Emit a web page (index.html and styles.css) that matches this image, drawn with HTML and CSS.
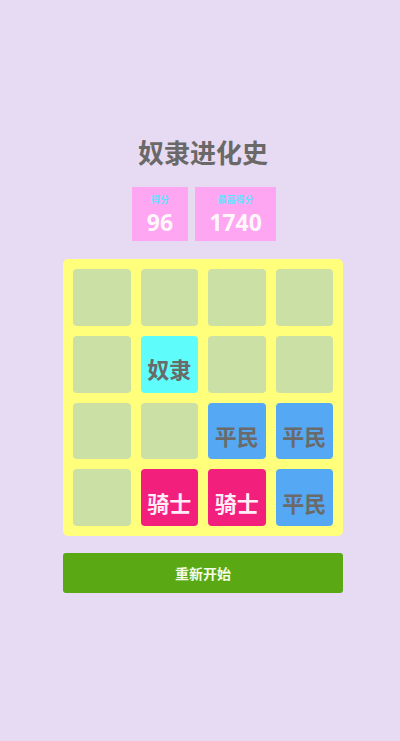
FILE: index.html
```html
<!DOCTYPE html>
<html lang="zh">
<head>
<meta charset="utf-8">
<link rel="stylesheet" href="styles.css">
</head>
<body>
<div class="app">
  <h1 class="title">奴隶进化史</h1>
  <div class="scores">
    <div class="score s1"><div class="label">得分</div><div class="num">96</div></div>
    <div class="score s2"><div class="label">最高得分</div><div class="num">1740</div></div>
  </div>
  <div class="board">
    <div class="cell"></div><div class="cell"></div><div class="cell"></div><div class="cell"></div>
    <div class="cell"></div><div class="cell slave">奴隶</div><div class="cell"></div><div class="cell"></div>
    <div class="cell"></div><div class="cell"></div><div class="cell civ">平民</div><div class="cell civ">平民</div>
    <div class="cell"></div><div class="cell knight">骑士</div><div class="cell knight">骑士</div><div class="cell civ">平民</div>
  </div>
  <button class="restart">重新开始</button>
</div>
</body>
</html>
```
FILE: styles.css
```css
html, body {
  margin: 0;
  padding: 0;
  background: #e7dbf3;
  height: 100%;
}
body {
  font-family: "Noto Sans CJK SC", "Noto Sans", sans-serif;
}
.app {
  width: 280px;
  margin-left: 63px;
  padding-top: 133px;
  display: flex;
  flex-direction: column;
  align-items: center;
}
.title {
  margin: 0;
  font-size: 26px;
  line-height: 38px;
  font-weight: 700;
  color: #6b6868;
}
.scores {
  margin-top: 16px;
  display: flex;
  gap: 7px;
  padding-left: 2px;
}
.score {
  height: 54px;
  background: #fea6f2;
  display: flex;
  flex-direction: column;
  align-items: center;
  box-sizing: border-box;
  padding-top: 8px;
}
.s1 { width: 56px; }
.s2 { width: 81px; }
.label {
  font-size: 9px;
  line-height: 10px;
  color: #5fe4ff;
  font-weight: 700;
}
.num {
  margin-top: 4px;
  font-family: "Open Sans", "Noto Sans", sans-serif;
  font-size: 23px;
  line-height: 26px;
  font-weight: 700;
  color: #fff8fb;
}
.board {
  margin-top: 18px;
  width: 280px;
  height: 277px;
  box-sizing: border-box;
  padding: 10px;
  background: #ffff7c;
  border-radius: 5px;
  display: grid;
  grid-template-columns: repeat(4, 1fr);
  grid-template-rows: repeat(4, 1fr);
  gap: 10px;
}
.cell {
  background: #cbe0a5;
  border-radius: 4px;
  display: flex;
  align-items: center;
  justify-content: center;
  padding-top: 8px;
  font-size: 22px;
  font-weight: 700;
  color: #6a6a6a;
}
.slave { background: #5ffcfc; }
.civ { background: #55a8f4; }
.knight { background: #f21f7d; color: #ffeef7; }
.restart {
  margin-top: 17px;
  width: 280px;
  height: 40px;
  border: none;
  border-radius: 3px;
  background: #5aa914;
  color: #f4fbe8;
  font-family: "Noto Sans CJK SC", sans-serif;
  font-size: 14px;
  font-weight: 700;
  padding: 0;
}
```
